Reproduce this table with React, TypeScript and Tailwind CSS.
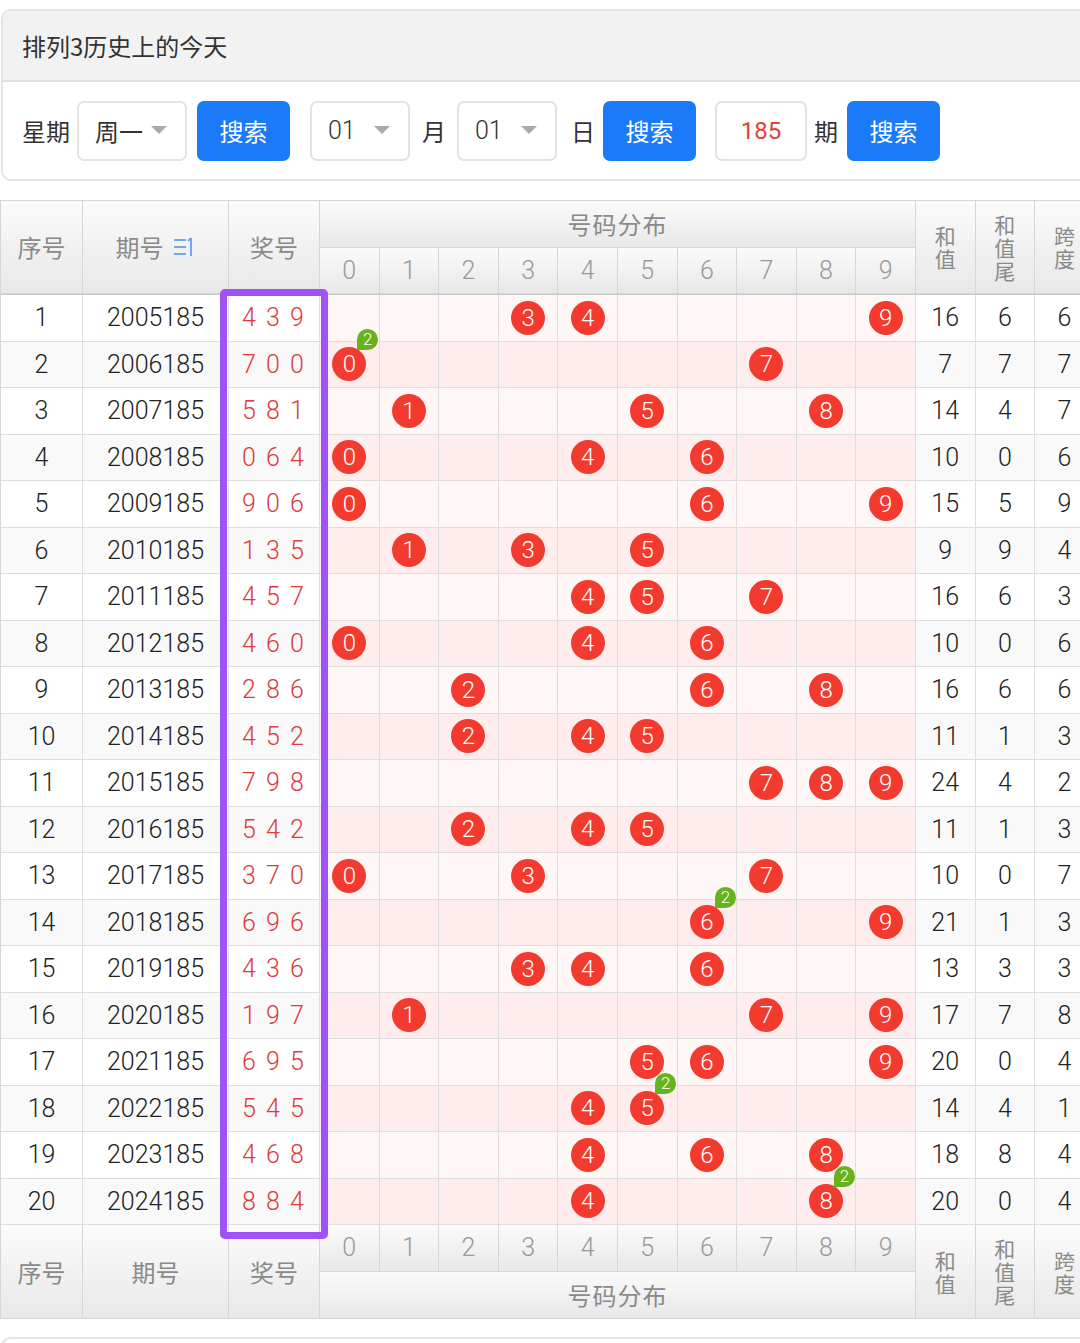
import React from "react";

type Row = [number, string, string, number, number, number];

const rows: Row[] = [
  [1, "2005185", "439", 16, 6, 6],
  [2, "2006185", "700", 7, 7, 7],
  [3, "2007185", "581", 14, 4, 7],
  [4, "2008185", "064", 10, 0, 6],
  [5, "2009185", "906", 15, 5, 9],
  [6, "2010185", "135", 9, 9, 4],
  [7, "2011185", "457", 16, 6, 3],
  [8, "2012185", "460", 10, 0, 6],
  [9, "2013185", "286", 16, 6, 6],
  [10, "2014185", "452", 11, 1, 3],
  [11, "2015185", "798", 24, 4, 2],
  [12, "2016185", "542", 11, 1, 3],
  [13, "2017185", "370", 10, 0, 7],
  [14, "2018185", "696", 21, 1, 3],
  [15, "2019185", "436", 13, 3, 3],
  [16, "2020185", "197", 17, 7, 8],
  [17, "2021185", "695", 20, 0, 4],
  [18, "2022185", "545", 14, 4, 1],
  [19, "2023185", "468", 18, 8, 4],
  [20, "2024185", "884", 20, 0, 4],
];

const CJK = "font-['Noto_Sans_CJK_SC',sans-serif]";
const NUM = "font-['Roboto','Noto_Sans',sans-serif]";

const GRID = "grid grid-cols-[82px_146px_91px_repeat(13,59.6px)]";

const HCELL =
  "flex items-center justify-center border-r border-b border-[#d6d6d6] bg-linear-to-b from-[#fbfbfb] to-[#e8e8e8] text-[#8a8a8a]";

function Caret() {
  return (
    <svg width="16" height="9" viewBox="0 0 16 9" className="shrink-0">
      <path d="M0 0 L16 0 L8 8 Z" fill="#aaaaaa" />
    </svg>
  );
}

function SortIcon() {
  return (
    <svg width="24" height="24" viewBox="0 0 24 24" className="ml-[8px]" fill="none" stroke="#6fa8ef" strokeWidth="2">
      <path d="M2 5 H14" />
      <path d="M2 12 H14" />
      <path d="M2 19 H14" />
      <path d="M19 3 V21" />
      <path d="M19 3 L16 6" />
    </svg>
  );
}

function Ball({ n, count }: { n: number; count: number }) {
  return (
    <div className="relative w-[34px] h-[34px] rounded-full bg-[#f23a2f] flex items-center justify-center text-white text-[24px] leading-none">
      <span className={`${NUM} font-light`}>{n}</span>
      {count > 1 && (
        <div className="absolute left-[25px] top-[-18px] w-[21px] h-[21px] rounded-[11px_11px_11px_0] bg-[#67b21d] flex items-center justify-center text-white text-[17px] leading-none">
          <span className={NUM}>{count}</span>
        </div>
      )}
    </div>
  );
}

function StackText({ chars }: { chars: string[] }) {
  return (
    <div className={`flex flex-col items-center text-[21px] leading-[23px] ${CJK}`}>
      {chars.map((c, i) => (
        <span key={i} className="block h-[23px]">
          {c}
        </span>
      ))}
    </div>
  );
}

function Select({ value, w, textCls }: { value: string; w: string; textCls: string }) {
  return (
    <div className={`${w} h-[60px] border-2 border-[#e2e2e2] rounded-[7px] bg-white flex items-center justify-between pl-[16px] pr-[18px]`}>
      <span className={textCls}>{value}</span>
      <Caret />
    </div>
  );
}

function Btn() {
  return (
    <div className={`w-[93px] h-[60px] rounded-[7px] bg-[#1a7af8] flex items-center justify-center text-white text-[24px] ${CJK}`}>
      搜索
    </div>
  );
}

export default function App() {
  return (
    <div className="w-[1080px] h-[1343px] overflow-hidden bg-white text-[#333]">
      <div className="w-[1100px] pt-[9px]">
        {/* Top card */}
        <div className="ml-[1px] border-2 border-[#e4e4e4] rounded-[10px] overflow-hidden">
          <div className={`h-[71px] bg-[#f2f2f2] border-b-2 border-[#e0e0e0] flex items-center pl-[19px] text-[24px] text-[#333] ${CJK}`}>
            排列3历史上的今天
          </div>
          <div className="h-[97px] flex items-center pl-[19px]">
            <span className={`w-[48px] text-[24px] ${CJK}`}>星期</span>
            <div className="ml-[7px]">
              <Select value="周一" w="w-[110px]" textCls={`text-[24px] ${CJK}`} />
            </div>
            <div className="ml-[10px]">
              <Btn />
            </div>
            <div className="ml-[20px]">
              <Select value="01" w="w-[100px]" textCls={`text-[25px] font-light ${NUM}`} />
            </div>
            <span className={`ml-[12px] w-[24px] text-[24px] ${CJK}`}>月</span>
            <div className="ml-[11px]">
              <Select value="01" w="w-[100px]" textCls={`text-[25px] font-light ${NUM}`} />
            </div>
            <span className={`ml-[14px] w-[24px] text-[24px] ${CJK}`}>日</span>
            <div className="ml-[8px]">
              <Btn />
            </div>
            <div className={`ml-[19px] w-[92px] h-[60px] border-2 border-[#e2e2e2] rounded-[7px] flex items-center justify-center text-[24px] text-[#e0433a] ${NUM}`}>
              185
            </div>
            <span className={`ml-[7px] w-[24px] text-[24px] ${CJK}`}>期</span>
            <div className="ml-[9px]">
              <Btn />
            </div>
          </div>
        </div>

        {/* Table */}
        <div className="relative mt-[19px] w-[1094px] border-t border-l border-[#d6d6d6]">
          {/* header */}
          <div className={`${GRID} grid-rows-[47px_46px] border-b border-[#c8c8c8]`}>
            <div className={`${HCELL} row-span-2 text-[24px] ${CJK}`}>序号</div>
            <div className={`${HCELL} row-span-2 text-[24px] text-[#6fa8ef] ${CJK}`}>
              期号
              <SortIcon />
            </div>
            <div className={`${HCELL} row-span-2 text-[24px] ${CJK}`}>奖号</div>
            <div className={`${HCELL} col-span-10 text-[24px] tracking-[1px] ${CJK}`}>号码分布</div>
            <div className={`${HCELL} row-span-2`}>
              <StackText chars={["和", "值"]} />
            </div>
            <div className={`${HCELL} row-span-2`}>
              <StackText chars={["和", "值", "尾"]} />
            </div>
            <div className={`${HCELL} row-span-2`}>
              <StackText chars={["跨", "度"]} />
            </div>
            {Array.from({ length: 10 }).map((_, i) => (
              <div key={i} className={`${HCELL} text-[25px] font-light text-[#999] ${NUM}`}>
                {i}
              </div>
            ))}
          </div>

          {/* body */}
          {rows.map((r, idx) => {
            const even = idx % 2 === 1;
            const plain = even ? "bg-[#f9f9f9]" : "bg-white";
            const pink = even ? "bg-[#ffecec]" : "bg-[#fff6f6]";
            const digits = r[2].split("").map(Number);
            const counts: Record<number, number> = {};
            digits.forEach((d) => (counts[d] = (counts[d] || 0) + 1));
            const cell = "flex items-center justify-center border-r border-b border-[#dedede]";
            return (
              <div key={idx} className={`${GRID} h-[46.5px] text-[25px] font-light text-[#222] ${NUM}`}>
                <div className={`${cell} ${plain}`}>{r[0]}</div>
                <div className={`${cell} ${plain}`}>{r[1]}</div>
                <div className={`${cell} ${plain} text-[#dd3b3b] tracking-[2px]`}>{digits.join(" ")}</div>
                {Array.from({ length: 10 }).map((_, d) => (
                  <div key={d} className={`${cell} ${pink}`}>
                    {counts[d] ? <Ball n={d} count={counts[d]} /> : null}
                  </div>
                ))}
                <div className={`${cell} ${plain}`}>{r[3]}</div>
                <div className={`${cell} ${plain}`}>{r[4]}</div>
                <div className={`${cell} ${plain}`}>{r[5]}</div>
              </div>
            );
          })}

          {/* footer */}
          <div className={`${GRID} grid-rows-[47px_47px]`}>
            <div className={`${HCELL} row-span-2 text-[24px] ${CJK}`}>序号</div>
            <div className={`${HCELL} row-span-2 text-[24px] ${CJK}`}>期号</div>
            <div className={`${HCELL} row-span-2 text-[24px] ${CJK}`}>奖号</div>
            {Array.from({ length: 10 }).map((_, i) => (
              <div key={i} className={`${HCELL} text-[25px] font-light text-[#999] ${NUM}`}>
                {i}
              </div>
            ))}
            <div className={`${HCELL} row-span-2 col-start-14 row-start-1`}>
              <StackText chars={["和", "值"]} />
            </div>
            <div className={`${HCELL} row-span-2 col-start-15 row-start-1`}>
              <StackText chars={["和", "值", "尾"]} />
            </div>
            <div className={`${HCELL} row-span-2 col-start-16 row-start-1`}>
              <StackText chars={["跨", "度"]} />
            </div>
            <div className={`${HCELL} col-span-10 col-start-4 row-start-2 text-[24px] tracking-[1px] ${CJK}`}>号码分布</div>
          </div>

          {/* highlight frame */}
          <div className="absolute left-[219px] top-[88px] w-[108px] h-[950px] border-[7px] border-[#a052f7] rounded-[5px] pointer-events-none" />
        </div>

        {/* Next card */}
        <div className="mt-[18px] ml-[1px] h-[40px] border-2 border-[#e4e4e4] rounded-t-[10px]" />
      </div>
    </div>
  );
}
